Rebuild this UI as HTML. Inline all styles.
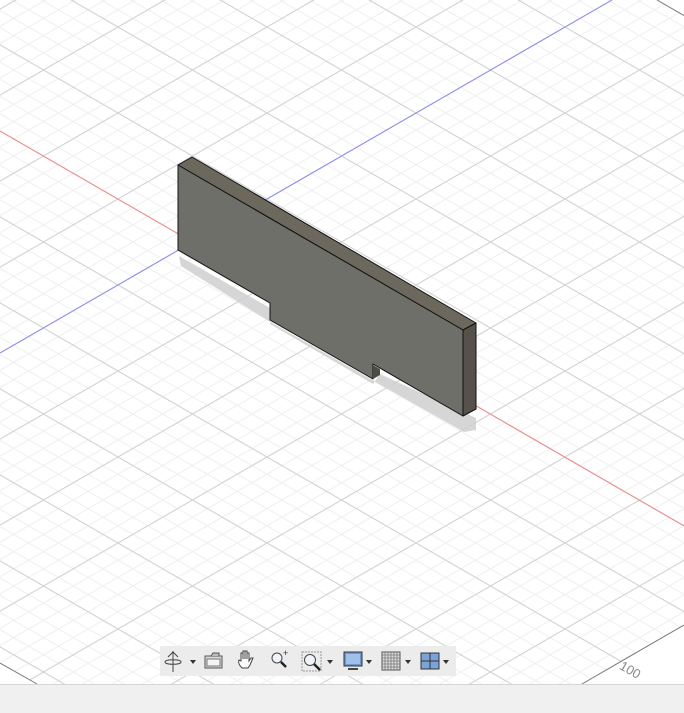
<!DOCTYPE html>
<html><head><style>
html,body{margin:0;padding:0;background:#fff;width:684px;height:713px;overflow:hidden}
svg{display:block}
</style></head><body>
<svg width="684" height="713" viewBox="0 0 684 713" xmlns="http://www.w3.org/2000/svg">
<defs>
<pattern id="minor" patternUnits="userSpaceOnUse" x="192.5" y="242" width="29.8" height="17.2">
<path d="M0 0L29.8 17.2M0 17.2L29.8 0" stroke="#efefef" stroke-width="1" fill="none"/>
</pattern>
<pattern id="major" patternUnits="userSpaceOnUse" x="192.5" y="242" width="149" height="86">
<path d="M0 0L149 86M0 86L149 0" stroke="#d2d2d2" stroke-width="1" fill="none"/>
</pattern>
<clipPath id="gc"><polygon points="-1000,-957 1212,320 309,841 -1000,86"/></clipPath>
</defs>
<rect width="684" height="713" fill="#fff"/>
<g clip-path="url(#gc)">
<rect width="684" height="713" fill="url(#minor)"/>
<rect width="684" height="713" fill="url(#major)"/>
<line x1="0" y1="131" x2="684" y2="526" stroke="#f08a8a" stroke-width="1"/>
<line x1="0" y1="353" x2="612" y2="0" stroke="#8a8af5" stroke-width="1"/>
</g>
<line x1="657" y1="0" x2="684" y2="15.6" stroke="#777" stroke-width="1"/>
<line x1="0" y1="663" x2="37" y2="684" stroke="#777" stroke-width="1"/>
<line x1="582" y1="684" x2="684" y2="625" stroke="#777" stroke-width="1"/>
<text x="620" y="673" font-family="Liberation Sans, sans-serif" font-size="13" fill="#888" transform="rotate(30 628 668)">100</text>
<polygon points="179,256 270,308 270,324 373,384 380,374 476,418 476,430 464,432 372,380 270,322 181,266" fill="#cfcfcf" opacity="0.85"/>
<polygon points="178,165 192,157 476,323 463,330" fill="#6d685e" stroke="#111" stroke-width="1" stroke-linejoin="round"/>
<polygon points="463,330 476,323 476,409 463,416" fill="#56524b" stroke="#111" stroke-width="1" stroke-linejoin="round"/>
<polygon points="178,165 463,330 463,416 373,364 373,379 270,320 270,303 178,250" fill="#6f6f6a" stroke="#111" stroke-width="1" stroke-linejoin="round"/>
<polygon points="373,365 380,369 380,375 373,379" fill="#4e4b45"/>
<rect x="160" y="646" width="296" height="30" fill="#ececec"/>
<g stroke="#444" fill="none" stroke-width="1">
<path d="M173 651v21M168 657l5-5 5 5M165 662c0 3 16 3 16 0s-16-3-16 0"/>
</g>
<path d="M190 660h6l-3 4z" fill="#333"/>
<rect x="205" y="656" width="17" height="12" fill="#d8d8d8" stroke="#555"/>
<rect x="207" y="659" width="13" height="7" fill="#f4f4f4" stroke="#777"/>
<path d="M211 656l2-3h6v3" fill="#bbb" stroke="#555"/>
<path d="M242 668c-3-3-4-6-3-8l2 1v-8h2v6-8h2v8-8h2v8-6h2v8l2-3h2l-3 7-2 3z" fill="#fafafa" stroke="#444"/>
<circle cx="277" cy="658" r="5" fill="#eef4fa" stroke="#444"/>
<path d="M281 662l5 5" stroke="#222" stroke-width="2.5"/>
<text x="283" y="656" font-family="Liberation Sans, sans-serif" font-size="9" fill="#333">+</text>
<rect x="302" y="652" width="19" height="19" fill="none" stroke="#999" stroke-dasharray="2,1"/>
<circle cx="310" cy="660" r="5.5" fill="#eef4fa" stroke="#444"/>
<path d="M314 664l6 6" stroke="#222" stroke-width="2.5"/>
<path d="M327 660h6l-3 4z" fill="#333"/>
<rect x="344" y="652" width="18" height="14" fill="#6f97cf" stroke="#333"/>
<rect x="346" y="654" width="14" height="10" fill="#9fc0e8"/>
<path d="M348 669h10" stroke="#444" stroke-width="2"/>
<path d="M366 660h6l-3 4z" fill="#333"/>
<rect x="382" y="652" width="18" height="18" fill="#ddd" stroke="#555"/>
<path d="M385 652v18M388 652v18M391 652v18M394 652v18M397 652v18M382 655h18M382 658h18M382 661h18M382 664h18M382 667h18" stroke="#777" stroke-width="0.8"/>
<path d="M405 660h6l-3 4z" fill="#333"/>
<rect x="421" y="653" width="18" height="16" fill="#7aa3d8" stroke="#333"/>
<path d="M430 653v16M421 661h18" stroke="#333"/>
<path d="M443 660h6l-3 4z" fill="#333"/>
<rect x="0" y="684" width="684" height="29" fill="#f0f0f0"/>
<line x1="0" y1="684.5" x2="684" y2="684.5" stroke="#d6d6d6"/>
</svg>
</body></html>
